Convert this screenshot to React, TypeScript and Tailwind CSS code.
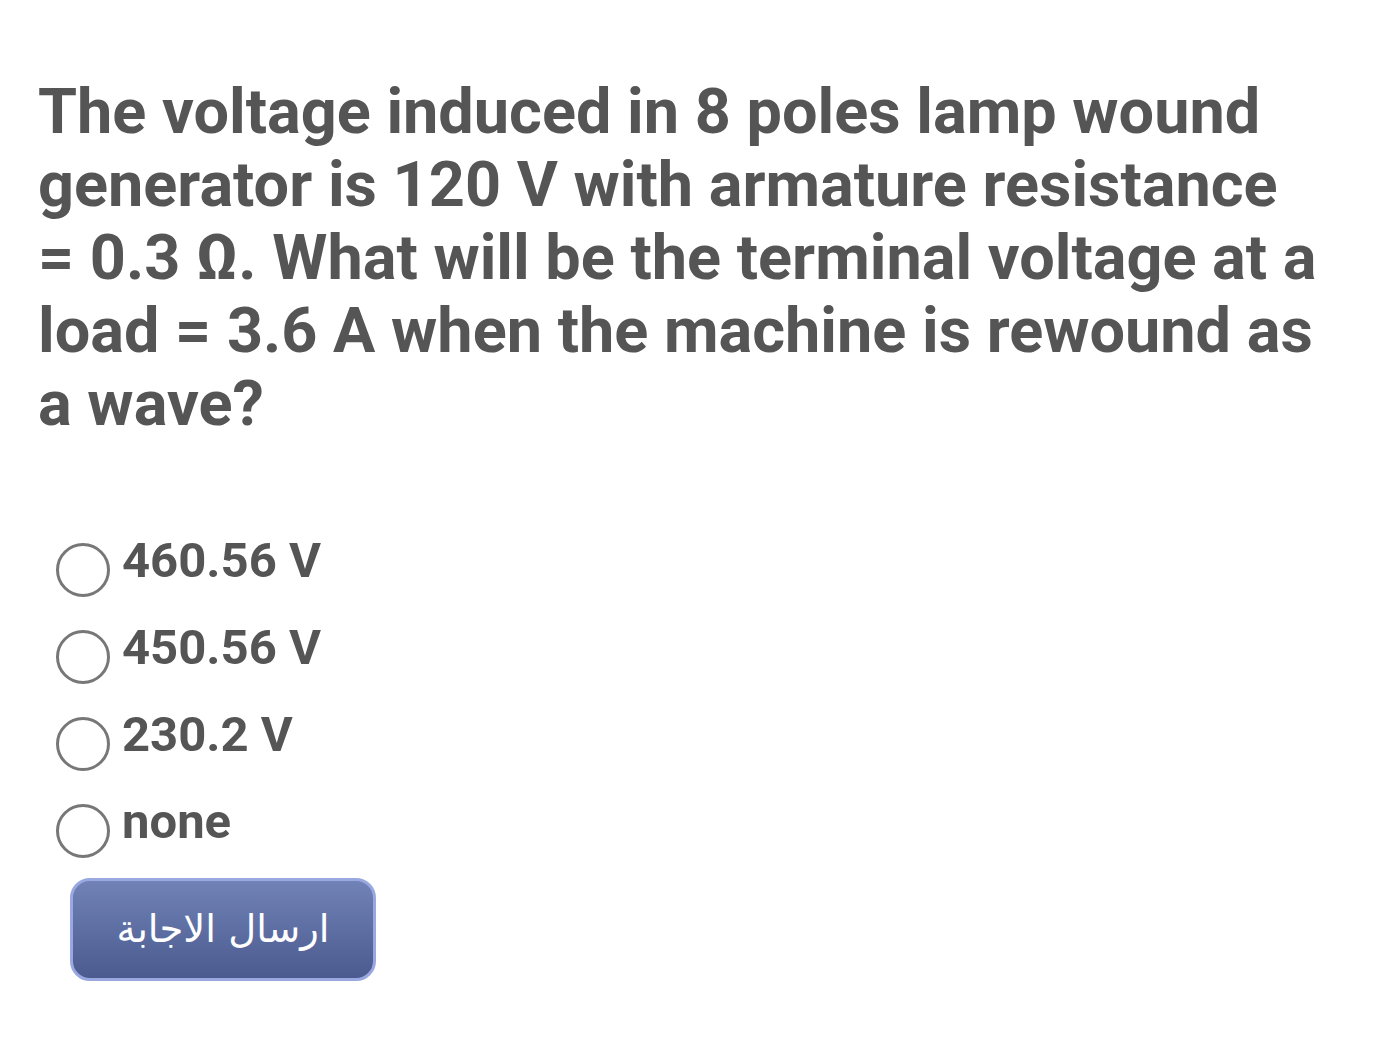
import React from 'react';

const options = ['460.56 V', '450.56 V', '230.2 V', 'none'];

export default function App() {
  return (
    <div className="min-h-[1057px] w-[1399px] bg-white font-['Roboto',sans-serif] text-[#555555]">
      <div className="pl-[38px] pt-[75px]">
        <p className="w-[1283px] text-[63px] font-bold leading-[73px]">
          The voltage induced in 8 poles lamp wound generator is 120 V with armature resistance = 0.3 Ω. What will
          be the terminal voltage at a load = 3.6 A when the machine is rewound as a wave?
        </p>

        <div className="mt-[103px] flex flex-col gap-[33px] pl-[18px]">
          {options.map((opt) => (
            <label key={opt} className="flex h-[54px] items-center gap-[12px]">
              <span className="h-[54px] w-[54px] shrink-0 rounded-full border-[3px] border-[#777777]" />
              <span className="-mt-[20px] text-[49px] font-bold leading-none">{opt}</span>
            </label>
          ))}
        </div>

        <button className="ml-[32px] mt-[20px] flex h-[103px] w-[306px] items-center justify-center rounded-[20px] border-[3px] border-[#99a8e0] bg-gradient-to-b from-[#7182b6] to-[#4b5b90] text-white">
          <span dir="rtl" className="font-['DejaVu_Sans',sans-serif] text-[38.5px] leading-none">
            ارسال الاجابة
          </span>
        </button>
      </div>
    </div>
  );
}
